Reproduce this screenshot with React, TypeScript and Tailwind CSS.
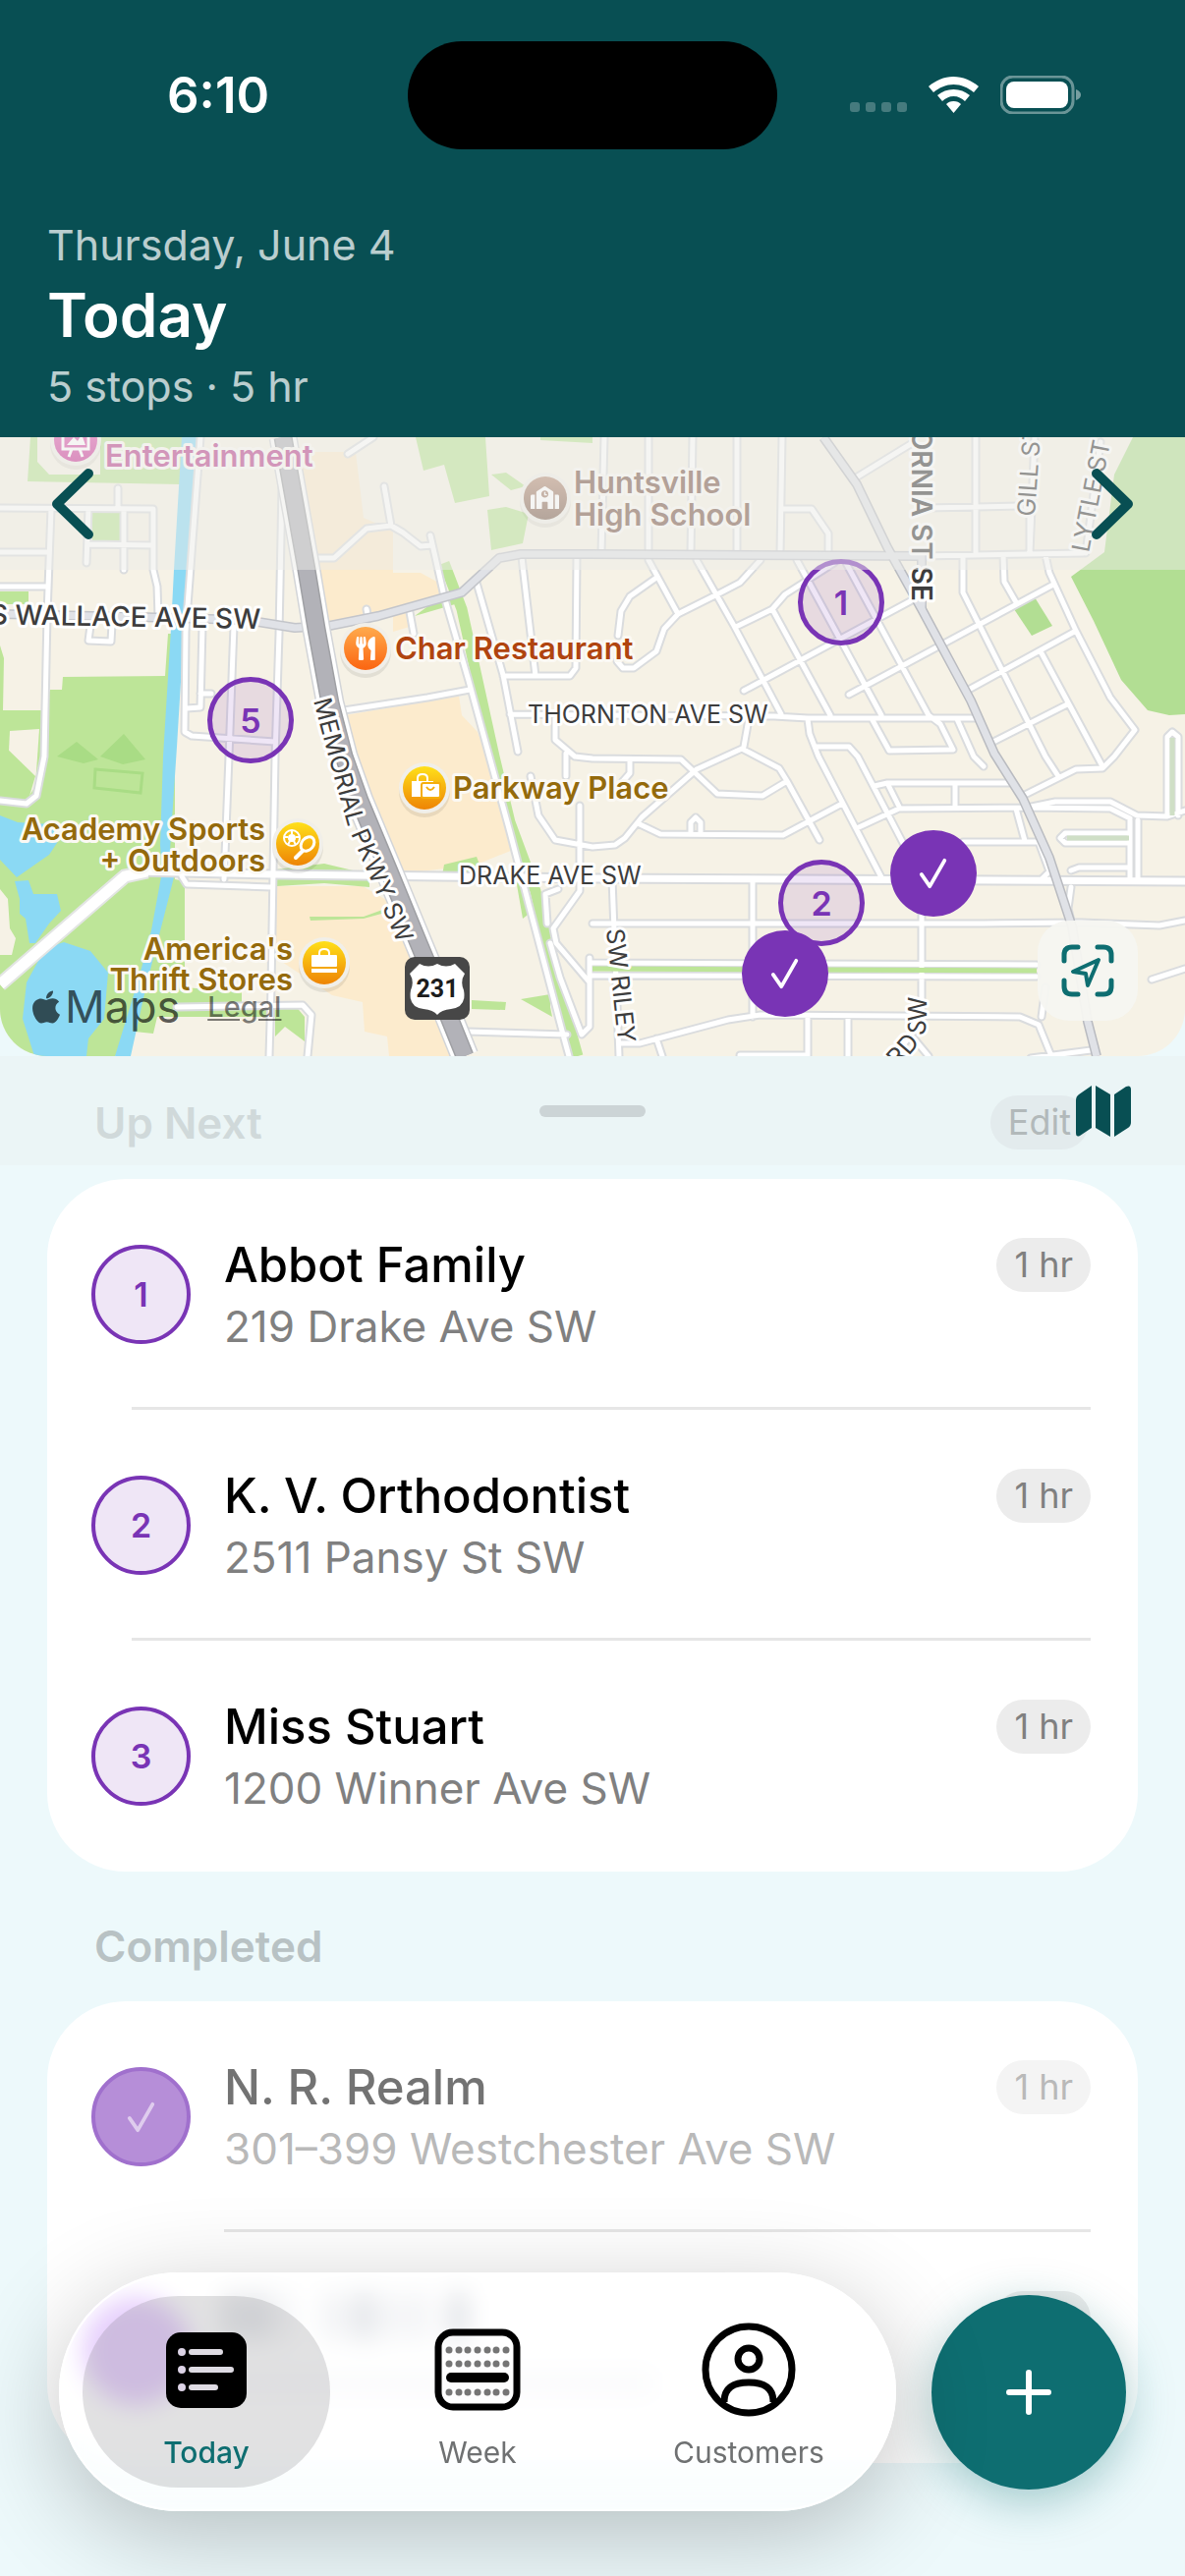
import { useState } from 'react';
import { FaApple, FaSchool, FaUtensils } from 'react-icons/fa';

type Stop = { id: number; name: string; address: string; duration: string };

const upNext: Stop[] = [
  { id: 1, name: 'Abbot Family', address: '219 Drake Ave SW', duration: '1 hr' },
  { id: 2, name: 'K. V. Orthodontist', address: '2511 Pansy St SW', duration: '1 hr' },
  { id: 3, name: 'Miss Stuart', address: '1200 Winner Ave SW', duration: '1 hr' }
];

const streets = [
  // west side
  'M0 72L156 73V135L160 152L161 182',
  'M52 73L48 180L45 325L37 365L27 373L0 370',
  'M0 117H50M0 152H48M120 52V73M90 73L88 128M126 73V135M90 109L156 110',
  'M92 192L90 207L113 208L114 190',
  'M204 0L189 198L188 300L195 304L280 310',
  'M206 192L204 275L190 276M204 261H215',
  'M238 192L233 325L228 450',
  'M288 0L284 200L280 325L276 560L274 630',
  'M185 447L190 455L276 458',
  'M180 580L308 578L317 588L313 630',
  // between the parkway and the school
  'M323 123L340 123L373 93L398 90L410 97L428 111L440 110',
  'M391 50L398 90M354 17L380 0',
  'M350 278L435 265L478 257M417 178L421 200M373 175L375 185',
  'M438 100L452 162L477 248L498 325L519 402L538 475L573 608L579 630',
  'M485 148L512 242L527 320M512 243H580L586 235L587 122M531 122L545 243',
  'M519 282L603 283L788 284L822 286L992 286',
  'M565 285V308L585 325L603 327L693 328L730 363L776 365L801 350',
  'M709 338L755 317L793 337L801 350L834 410',
  'M709 338L653 387L636 408L626 415L603 417L565 410L548 385L540 345M641 328V342L634 350',
  'M576 322V345',
  'M649 393L672 404L797 405L857 373M703 403V392L708 387L713 392V403',
  'M762 287L757 315',
  'M590 375V462L563 500L566 515L600 555M568 460L555 465L557 495',
  'M560 515L570 550L592 608L600 600V530M475 605L577 608',
  // north east grid
  'M615 0L612 118M660 0V118M705 0L703 118M750 0V118M796 0L794 118',
  'M795 73H826L843 98V120M868 43L930 5M993 0V120M943 72L1038 70M1048 78V118',
  'M938 121L1103 118M1120 5L1105 118M1053 0L1048 118',
  'M980 122V158L1064 325M1021 120L1022 147L1034 168',
  'M1064 120L1068 138L1095 197L1130 265L1155 298L1134 325L1122 337L1095 338L1041 365',
  'M864 262L1072 150M984 258L1095 197M1011 310L1086 272M1059 218L1122 335M1064 325L1077 345',
  'M757 258L930 165M749 193L786 175L799 160L849 128',
  'M709 125L747 192L795 282M660 125L690 180M786 175L845 283M811 125L853 202L897 283',
  'M774 125L753 148L730 160L690 180L676 195L668 218L645 235H634L628 228',
  'M668 143L641 162L632 177L629 202',
  'M861 128L945 283L957 292L970 318L905 319L888 288',
  'M822 287L824 302L833 325L897 448M830 315H864L873 325L920 415M974 287L991 325L1001 335',
  // south east
  'M890 355L903 352H1030M872 398L915 378L1045 377M903 352L916 378M972 352V377',
  'M1045 377L1074 371H1130L1157 385L1188 386L1206 380M1045 377L1130 378L1150 388',
  'M1034 378L1043 411M980 412H1057M1150 390V450M1158 390V450',
  'M1149 403H1084L1079 408L1084 413H1149M1090 441L1098 438H1149',
  'M1188 385V305L1193 300L1199 305V385',
  'M603 495L1000 495L1100 494L1180 497L1206 492M766 450V590M623 450L630 630M938 450V600',
  'M603 535L1055 537M603 548L1055 549M1057 412L1068 442L1060 450M1090 458L1087 480L1092 500',
  'M632 617H651L741 593L774 588L1038 590L1057 598L1070 630M1060 590L1064 560',
  'M668 612L674 630M822 592V630M863 592V630M753 629H822M934 600L910 630M930 612L945 630M1172 552L1206 541',
  'M1049 632L1110 624'
].join('');

const greens = [
  'M31 0L28 45L184 48L190 0H102V38H50L38 25V0Z',
  'M94 77H123V105H94ZM0 157H29V170H0Z',
  'M0 212L4 225L3 278H42L51 257H63L64 244L168 243L171 200H178V450L188 452V560L246 565V580L300 578L310 590V615L290 600L280 610V590H160L156 607L137 605L117 630H0Z',
  'M423 0H494L498 60L463 67L452 28L431 34Z',
  'M496 74L515 71L538 78L532 108L500 115ZM500 38L515 36L535 50L520 54Z',
  'M550 0H603V6L550 3Z',
  'M280 440L330 434L376 445V458L330 454L282 457ZM452 435L485 427L490 440L450 446Z',
  'M315 488L370 488L392 480V484L370 490L316 492Z',
  'M480 573L515 575L514 583L480 582ZM530 572L560 567V580L562 590Z',
  'M445 165L465 155L470 168L422 182Z'
];

type Poi = {
  x: number;
  y: number;
  fill: string;
  color: string;
  lines: { text: string; x: number; y: number }[];
  anchor: 'start' | 'end';
};

const pois: Poi[] = [
  { x: 77, y: 3, fill: 'url(#pink)', color: '#b8418c', anchor: 'start', lines: [{ text: 'Entertainment', x: 107, y: 30 }] },
  {
    x: 555, y: 62, fill: 'url(#brown)', color: '#7a5648', anchor: 'start',
    lines: [{ text: 'Huntsville', x: 584, y: 57 }, { text: 'High School', x: 584, y: 90 }]
  },
  { x: 372, y: 215, fill: 'url(#orange)', color: '#b0440f', anchor: 'start', lines: [{ text: 'Char Restaurant', x: 402, y: 226 }] },
  { x: 432, y: 357, fill: 'url(#gold)', color: '#946a0c', anchor: 'start', lines: [{ text: 'Parkway Place', x: 461, y: 368 }] },
  {
    x: 303, y: 414, fill: 'url(#gold)', color: '#946a0c', anchor: 'end',
    lines: [{ text: 'Academy Sports', x: 270, y: 410 }, { text: '+ Outdoors', x: 270, y: 442 }]
  },
  {
    x: 330, y: 535, fill: 'url(#gold)', color: '#946a0c', anchor: 'end',
    lines: [{ text: "America's", x: 298, y: 532 }, { text: 'Thrift Stores', x: 298, y: 563 }]
  }
];

function CheckIcon({ className }: { className: string }) {
  return (
    <svg viewBox="0 0 32 34" className={className} fill="none" stroke="currentColor" strokeWidth="4" strokeLinecap="round" strokeLinejoin="round">
      <path d="M3 18L12 31L28 3" />
    </svg>
  );
}

function Gradient({ id, from, to }: { id: string; from: string; to: string }) {
  return (
    <linearGradient id={id} x1="0" y1="0" x2="0" y2="1">
      <stop offset="0" stopColor={from} />
      <stop offset="1" stopColor={to} />
    </linearGradient>
  );
}

function MapCanvas() {
  return (
    <svg viewBox="0 0 1206 630" preserveAspectRatio="xMidYMid slice" className="block h-full w-full" aria-label="Route map" role="img">
      <defs>
        <Gradient id="pink" from="#e86fbd" to="#c93596" />
        <Gradient id="brown" from="#b98f79" to="#7d5f4f" />
        <Gradient id="orange" from="#ffab4d" to="#fb6511" />
        <Gradient id="gold" from="#ffe01a" to="#ee8405" />
        <path id="memorial" d="M319 268L336 332L354 396L386 471L420 552" />
        <path id="southRoad" d="M898 660L926 628Q943 612 943 592V530" />
      </defs>
      <rect width="1206" height="630" fill="#f6f2e6" />

      {/* retail blocks */}
      <g fill="#fcebcd">
        <path d="M305 15H362L370 82L400 95V138H428L450 150L455 162L335 190Z" />
        <path d="M400 178H420V192L400 198Z" />
        <path d="M352 283L467 263L470 283L486 300L515 380L522 420L485 435L404 445L375 365Z" />
        <path d="M281 457H369L400 475L430 560L458 630H396L394 610L371 605L369 575L338 568L281 530Z" />
      </g>

      {/* parks */}
      <g fill="#bde598">
        {greens.map((d) => (
          <path key={d} d={d} />
        ))}
      </g>
      <path d="M452 128L470 175L503 325L519 392L545 462L560 530L588 630" fill="none" stroke="#bde598" strokeWidth="11" />
      <path d="M525 450L545 480L532 490Z" fill="#bde598" />
      <path d="M1153 0H1206V282L1190 283L1168 278L1141 247L1113 187L1090 142L1124 117L1134 38Z" fill="#b2de93" />
      <path d="M1032 175L1053 163L1071 192L1050 202Z" fill="#b2de93" />
      <path d="M58 325L78 310L100 328L85 332ZM102 325L126 302L148 328L125 333Z" fill="#a9dc85" />
      <path d="M97 338L145 342L143 362L96 357Z" fill="none" stroke="#a9dc85" strokeWidth="3" />
      <path d="M10 299L40 297L36 355L28 368L8 340Z" fill="#f6f2e6" />
      <path d="M0 310L36 345L28 372H0Z" fill="#bde598" />
      <path d="M0 460L8 470L10 500L16 510L12 527H0Z" fill="#f6f2e6" />

      {/* water */}
      <g fill="#8bd9f4">
        <path d="M185 0L177 135L174 195L166 325L163 415L165 442L154 502L142 548L117 630H133L148 562L165 495L177 448L173 420L180 315L190 150L202 0Z" />
        <path d="M0 385L18 392L70 395L50 425L17 448L0 430Z" />
        <path d="M15 452L29 451L34 465L58 465L62 482L50 495L36 515H30L26 490L20 485V470Z" />
        <path d="M46 520L65 514L92 523L110 545L106 592L90 612L88 630H35L23 592L27 555Z" />
      </g>

      {/* streets: casing first, then surface */}
      <path d="M0 557L127 447L150 442" fill="none" stroke="#e3e5e4" strokeWidth="15" />
      <path d="M138 442L280 445L603 449L1206 452" fill="none" stroke="#d9dbdd" strokeWidth="11" />
      <path d={streets} fill="none" stroke="#dadcde" strokeWidth="9" strokeLinejoin="round" strokeLinecap="round" />
      <path d={streets} fill="none" stroke="#ffffff" strokeWidth="5" strokeLinejoin="round" strokeLinecap="round" />
      <path d="M138 442L280 445L603 449L1206 452" fill="none" stroke="#ffffff" strokeWidth="7" />
      <path d="M0 557L127 447L150 442" fill="none" stroke="#ffffff" strokeWidth="11" />
      <path d="M603 541L1055 543" stroke="#bde598" strokeWidth="5" />
      <path d="M1086 408H1149M1193 306V385" stroke="#cfdfc6" strokeWidth="5" />

      {/* arterials */}
      <g fill="none" strokeLinejoin="round">
        <path d="M0 180L140 183L250 186L300 194L335 192L385 182L470 158L508 123L530 119H603L938 121V175" stroke="#c3c5ca" strokeWidth="10" />
        <path d="M838 0L872 48L903 112L938 175L988 268L1012 322L1041 368L1068 428L1091 498L1107 595L1116 630" stroke="#b9bbc0" strokeWidth="10" />
        <path d="M0 180L140 183L250 186L300 194L335 192L385 182L470 158L508 123L530 119H603L938 121V175" stroke="#e0e2e7" strokeWidth="7" />
        <path d="M838 0L872 48L903 112L938 175L988 268L1012 322L1041 368L1068 428L1091 498L1107 595L1116 630" stroke="#e0e2e7" strokeWidth="7" />
        <path d="M288 0L312 135L322 195L336 271L350 325L366 370L396 442L426 515L448 568L473 630" stroke="#d3d5d8" strokeWidth="29" />
        <path d="M288 0L312 135L322 195L336 271L350 325L366 370L396 442L426 515L448 568L473 630" stroke="#ffffff" strokeWidth="26" />
        <path d="M288 0L312 135L322 195L336 271L350 325L366 370L396 442L426 515L448 568L473 630" stroke="#9fa0a4" strokeWidth="19" />
        <path d="M288 0L312 135L322 195L336 271L350 325L366 370L396 442L426 515L448 568L473 630" stroke="#b2b2b8" strokeWidth="16" />
      </g>

      {/* street names */}
      <g fontFamily="Inter, sans-serif" fontSize="25" fill="#3d3d3d" stroke="#ffffff" strokeWidth="6" strokeLinejoin="round" className="[paint-order:stroke]">
        <text x="265" y="195" fontSize="28" fontWeight="500" textAnchor="end" transform="rotate(1 265 195)">S WALLACE AVE SW</text>
        <text x="537" y="291">THORNTON AVE SW</text>
        <text x="467" y="455">DRAKE AVE SW</text>
        <text>
          <textPath href="#memorial">MEMORIAL PKWY SW</textPath>
        </text>
        <text x="928" y="167" fontSize="28" fontWeight="600" textAnchor="end" transform="rotate(90 928 167)">CALIFORNIA ST SE</text>
        <text x="1053" y="81" transform="rotate(-86 1053 81)">GILL ST</text>
        <text x="1108" y="118" transform="rotate(-79 1108 118)">LYTLE ST</text>
        <text x="617" y="501" transform="rotate(84 617 501)">SW RILEY</text>
        <text>
          <textPath href="#southRoad" startOffset="24">RD SW</textPath>
        </text>
      </g>

      {/* places */}
      {pois.map((poi) => (
        <g key={poi.lines[0].text} fontFamily="Inter, sans-serif" fontSize="31" fontWeight="600">
          <circle cx={poi.x} cy={poi.y + 4} r="26" fill="#000000" opacity="0.08" />
          <circle cx={poi.x} cy={poi.y} r="26" fill="#f1efe9" />
          <circle cx={poi.x} cy={poi.y} r="22" fill={poi.fill} />
          {poi.lines.map((line) => (
            <text
              key={line.text}
              x={line.x}
              y={line.y}
              textAnchor={poi.anchor}
              fill={poi.color}
              stroke="#fbf9f4"
              strokeWidth="6"
              strokeLinejoin="round"
              className="[paint-order:stroke]"
            >
              {line.text}
            </text>
          ))}
        </g>
      ))}
      <g fill="none" stroke="#ffffff" strokeWidth="3">
        <path d="M64 -8H90V12H64ZM70 20L73 12M84 20L81 12" />
        <path d="M68 8L75 0L79 4L83 -3L87 8Z" fill="#ffffff" stroke="none" />
      </g>
      <FaSchool x="540" y="47" size={29} color="#ffffff" />
      <FaUtensils x="360" y="203" size={24} color="#ffffff" />
      <g>
        <path d="M419 350H441V366H419Z" fill="#ffffff" />
        <path d="M425 350V347Q425 343 430 343Q435 343 435 347V350" fill="none" stroke="#ffffff" strokeWidth="2" />
        <rect x="429" y="352" width="19" height="15" rx="2" fill="#ffffff" stroke="#f5ae0b" strokeWidth="2" />
        <path d="M434 356Q438 362 442 356" fill="none" stroke="#f5ae0b" strokeWidth="2" />
      </g>
      <g fill="none" stroke="#ffffff" strokeWidth="2">
        <circle cx="297" cy="408" r="8" />
        <circle cx="297" cy="408" r="3" fill="#ffffff" />
        <path d="M297 400V404M289 407H293M305 407H301M293 415L295 411M301 415L299 411" />
        <ellipse cx="313" cy="414" rx="6" ry="8" transform="rotate(40 313 414)" strokeWidth="3" />
        <path d="M308 421L301 428" strokeWidth="4" strokeLinecap="round" />
      </g>
      <g fill="#ffffff">
        <rect x="317" y="527" width="26" height="12" rx="1" />
        <path d="M317 541H343V545H317Z" />
        <path d="M325 528V525Q325 521 330 521Q335 521 335 525V528" fill="none" stroke="#ffffff" strokeWidth="2" />
      </g>

      {/* US route shield */}
      <rect x="412" y="529" width="66" height="64" rx="10" fill="#474747" />
      <path d="M427 536Q436 541 445 536Q454 541 463 536L473 546Q468 554 472 563Q475 580 459 582Q449 583 445 588Q441 583 431 582Q415 580 418 563Q422 554 417 546Z" fill="#ffffff" />
      <text x="445" y="570" textAnchor="middle" fontFamily="Roboto, sans-serif" fontSize="25" fontWeight="700" fill="#1d1d1d">231</text>
    </svg>
  );
}

const mapPins = [
  { label: '5', place: 'left-[211px] top-[244px]' },
  { label: '1', place: 'left-[812px] top-[124px]' },
  { label: '2', place: 'left-[792px] top-[430px]' },
  { label: 'done-1', place: 'left-[906px] top-[400px]' },
  { label: 'done-2', place: 'left-[755px] top-[502px]' }
];

function RouteMap() {
  return (
    <section className="relative h-[630px] overflow-hidden rounded-b-[48px]">
      <MapCanvas />
      {mapPins.map((pin) =>
        pin.label.startsWith('done') ? (
          <button
            key={pin.label}
            aria-label="Completed stop"
            className={`absolute flex size-[88px] items-center justify-center rounded-full bg-[#7934b5] text-white ${pin.place}`}
          >
            <CheckIcon className="size-8" />
          </button>
        ) : (
          <button
            key={pin.label}
            className={`absolute flex size-[88px] items-center justify-center rounded-full border-[5px] border-[#7934b5] bg-[#7934b5]/12 text-[34px] font-semibold text-[#7934b5] ${pin.place}`}
          >
            {pin.label}
          </button>
        )
      )}

      <div className="absolute inset-x-0 top-0 flex h-[135px] items-center justify-between bg-[#ecece7]/50 px-[50px]">
        <button aria-label="Previous day" className="text-[#084f53]">
          <svg width="46" height="74" viewBox="0 0 46 74" fill="none" stroke="currentColor" strokeWidth="10" strokeLinecap="round" strokeLinejoin="round">
            <path d="M40 6L8 37L40 68" />
          </svg>
        </button>
        <button aria-label="Next day" className="text-[#084f53]">
          <svg width="46" height="74" viewBox="0 0 46 74" fill="none" stroke="currentColor" strokeWidth="10" strokeLinecap="round" strokeLinejoin="round">
            <path d="M6 6L38 37L6 68" />
          </svg>
        </button>
      </div>

      <div className="absolute bottom-6 left-7 flex items-center text-black/65">
        <FaApple size={38} />
        <span className="text-[45px] leading-[52px]">Maps</span>
        <a href="#legal" className="ml-7 text-[29px] leading-9 font-medium text-black/50 underline">Legal</a>
      </div>

      <button
        aria-label="Center on my location"
        className="absolute right-12 bottom-9 flex size-[102px] items-center justify-center rounded-[32px] bg-[#f5f6f1]/95 text-[#0e6e71]"
      >
        <svg width="54" height="54" viewBox="0 0 54 54" fill="none" stroke="currentColor" strokeWidth="5" strokeLinecap="round" strokeLinejoin="round">
          <path d="M3 17V11Q3 3 11 3H17M37 3H43Q51 3 51 11V17M51 37V43Q51 51 43 51H37M17 51H11Q3 51 3 43V37" />
          <path d="M38 16L12 28L25 30L27 42Z" strokeWidth="4" />
        </svg>
      </button>
    </section>
  );
}

function StatusBar() {
  return (
    <div className="grid h-[193px] grid-cols-3 items-center">
      <span className="pl-[170px] text-[51px] leading-none font-semibold">6:10</span>
      <div className="h-[110px] w-[376px] justify-self-center rounded-full bg-black" />
      <div className="flex items-center justify-end gap-[22px] pr-[106px]">
        <div className="flex gap-[6px] pt-6">
          <i className="size-[10px] rounded-[3px] bg-white/25" />
          <i className="size-[10px] rounded-[3px] bg-white/25" />
          <i className="size-[10px] rounded-[3px] bg-white/25" />
          <i className="size-[10px] rounded-[3px] bg-white/25" />
        </div>
        <svg width="51" height="37" viewBox="0 0 51 37" fill="currentColor">
          <path d="M25 0C35 0 44 4 51 10L46 16C40 11 33 8 25.500 8C18 8 11 11 5 16L0 10C7 4 16 0 25 0Z" />
          <path d="M25.500 13C32 13 37 15 42 19L37 25C34 22 30 20 25.500 20C21 20 17 22 14 25L9 19C14 15 19 13 25.500 13Z" />
          <path d="M25.500 25C29 25 31 26 33 28L25.500 37L18 28C20 26 22 25 25.500 25Z" />
        </svg>
        <svg width="82" height="39" viewBox="0 0 82 39" fill="none">
          <rect x="1" y="1" width="73" height="37" rx="12" stroke="white" strokeOpacity="0.4" strokeWidth="3" />
          <rect x="6" y="6" width="63" height="27" rx="8" fill="white" />
          <path d="M77 14Q82 16 82 19.500Q82 23 77 25Z" fill="white" fillOpacity="0.45" />
        </svg>
      </div>
    </div>
  );
}

function StopRow({ stop }: { stop: Stop }) {
  return (
    <li className="relative flex h-[235px] items-start gap-[34px] px-[45px] pt-[58px] not-last:after:absolute not-last:after:right-12 not-last:after:bottom-0 not-last:after:left-[86px] not-last:after:h-[3px] not-last:after:bg-[#e6e6e6]">
      <span className="mt-[9px] flex size-[101px] shrink-0 items-center justify-center rounded-full border-4 border-[#7934b5] bg-[#efe6f6] text-[34px] font-semibold text-[#7934b5]">
        {stop.id}
      </span>
      <div className="flex-1">
        <h3 className="text-[49px] leading-[60px] font-medium text-black">{stop.name}</h3>
        <p className="text-[44px] leading-[64px] text-[#808080]">{stop.address}</p>
      </div>
      <span className="mt-[2px] mr-[3px] rounded-full bg-[#ececec] px-[18px] text-[36px] leading-[55px] text-[#808080]">{stop.duration}</span>
    </li>
  );
}

function TodayIcon() {
  return (
    <svg width="82" height="77" viewBox="0 0 82 77">
      <rect width="82" height="77" rx="15" fill="#000000" />
      <g stroke="#dedbe3" strokeWidth="6" strokeLinecap="round">
        <path d="M26 20H55M26 38H66M26 56H50" />
      </g>
      <g fill="#dcd3e6">
        <circle cx="16" cy="20" r="4" />
        <circle cx="16" cy="38" r="4" />
        <circle cx="16" cy="56" r="4" />
      </g>
    </svg>
  );
}

function WeekIcon() {
  return (
    <svg width="88" height="84" viewBox="0 0 88 84">
      <rect x="4" y="4" width="80" height="76" rx="15" fill="none" stroke="#000000" strokeWidth="7" />
      {[22, 36, 65].map((y) =>
        [15, 25, 34, 44, 54, 63, 73].map((x) => <circle key={`${x}-${y}`} cx={x} cy={y} r="3.500" fill="#757575" />)
      )}
      <path d="M17 50H71" stroke="#000000" strokeWidth="10" strokeLinecap="round" />
    </svg>
  );
}

function CustomersIcon() {
  return (
    <svg width="96" height="96" viewBox="0 0 96 96" fill="none" stroke="#000000" strokeWidth="7">
      <circle cx="48" cy="48" r="44" />
      <circle cx="48" cy="37" r="11" />
      <path d="M23 81C23 66 33 61 48 61C63 61 73 66 73 81" />
    </svg>
  );
}

const tabs = [
  { id: 'today', title: 'Today', Icon: TodayIcon },
  { id: 'week', title: 'Week', Icon: WeekIcon },
  { id: 'customers', title: 'Customers', Icon: CustomersIcon }
];

export default function App() {
  const [activeTab, setActiveTab] = useState('today');

  return (
    <div className="min-h-screen bg-[#edf9fb] font-[Inter,sans-serif]">
      <header className="bg-[#084f53] pb-6 text-white">
        <StatusBar />
        <div className="px-12 pt-7">
          <p className="text-[43px] leading-[56px] text-white/72">Thursday, June 4</p>
          <h1 className="text-[62px] leading-[88px] font-semibold">Today</h1>
          <p className="text-[43px] leading-[56px] text-white/72">5 stops · 5 hr</p>
        </div>
      </header>

      <RouteMap />

      <main className="pb-[115px]">
        <div className="relative flex h-[111px] items-center justify-between bg-[#ebf5f6] pt-6 pr-[98px] pl-24">
          <h2 className="text-[44px] leading-[56px] font-semibold text-[#d0d9da]">Up Next</h2>
          <button className="rounded-full bg-[#e3ebed] px-[18px] text-[36px] leading-[55px] text-[#b2b9ba]">Edit</button>
          <div className="absolute inset-x-0 top-[50px] mx-auto h-3 w-[108px] rounded-full bg-[#ccd4d6]" />
          <button aria-label="Show map" className="absolute top-[30px] right-[55px] text-[#084f53]">
            <svg width="56" height="52" viewBox="0 0 56 52" fill="currentColor">
              <path d="M16 0V43L4 51Q0 53 0 48V15Q0 11 3 9Z" />
              <path d="M20 0L35 9V52L20 43Z" />
              <path d="M39 9L51 1Q56 -1 56 4V37Q56 41 53 43L39 52Z" />
            </svg>
          </button>
        </div>

        <ul className="mx-12 mt-[14px] rounded-[80px] bg-white">
          {upNext.map((stop) => (
            <StopRow key={stop.id} stop={stop} />
          ))}
        </ul>

        <h2 className="px-24 pt-12 pb-7 text-[44px] leading-[56px] font-semibold text-[#b8c2c4]">Completed</h2>

        <ul className="mx-12 rounded-[80px] bg-white">
          <li className="relative flex h-[235px] items-start gap-[34px] px-[45px] pt-[58px] after:absolute after:right-12 after:bottom-0 after:left-[180px] after:h-[3px] after:bg-[#e6e6e6]">
            <span className="mt-[9px] flex size-[101px] shrink-0 items-center justify-center rounded-full border-4 border-[#a070cd] bg-[#b68ed8] text-[#dfccee]">
              <CheckIcon className="size-8" />
            </span>
            <div className="flex-1">
              <h3 className="text-[49px] leading-[60px] font-medium text-[#737373]">N. R. Realm</h3>
              <p className="text-[44px] leading-[64px] text-[#b9b9b9]">301–399 Westchester Ave SW</p>
            </div>
            <span className="mt-[2px] mr-[3px] rounded-full bg-[#f4f4f4] px-[18px] text-[36px] leading-[55px] text-[#b9b9b9]">1 hr</span>
          </li>
          {/* scrolled under the tab bar */}
          <li aria-hidden="true" className="flex h-[235px] items-start gap-[34px] px-9 pt-[58px]">
            <span className="mt-2 size-[110px] shrink-0 rounded-full bg-[#ad62f5]" />
            <div className="flex flex-1 flex-col gap-7 pt-1">
              <div className="flex gap-2">
                <span className="h-12 w-4 bg-gray-400" />
                <span className="h-12 w-5 bg-gray-400" />
                <span className="h-12 w-4 bg-gray-300" />
                <span className="ml-6 h-12 w-6 bg-gray-300" />
                <span className="h-12 w-5 bg-gray-400" />
                <span className="h-12 w-5 bg-gray-300" />
                <span className="h-12 w-5 bg-gray-300" />
                <span className="ml-3 h-12 w-5 bg-gray-400" />
              </div>
              <span className="h-8 w-[440px] rounded bg-gray-100" />
            </div>
            <span className="mt-[2px] mr-3 h-[55px] w-[97px] rounded-full bg-[#ececec]" />
          </li>
        </ul>
      </main>

      <div className="fixed inset-x-0 bottom-0 flex items-center justify-between px-[60px] pb-[66px]">
        <nav className="flex gap-6 rounded-full border-2 border-white bg-white/70 px-[22px] py-[22px] shadow-[0_24px_100px_rgba(0,0,0,0.24)] backdrop-blur-md">
          {tabs.map(({ id, title, Icon }) => (
            <button
              key={id}
              onClick={() => setActiveTab(id)}
              className={`flex h-[195px] w-[252px] flex-col items-center rounded-full pt-[27px] text-[30px] ${
                activeTab === id ? 'bg-[#78787d]/22 font-medium text-[#0e6e71]' : 'text-[#6f7172]'
              }`}
            >
              <span className="flex h-24 items-center">
                <Icon />
              </span>
              <span className="mt-4 leading-10">{title}</span>
            </button>
          ))}
        </nav>
        <button
          aria-label="Add stop"
          className="flex size-[198px] items-center justify-center rounded-full bg-[#0e6e71] text-white shadow-[0_12px_48px_rgba(14,110,113,0.35)]"
        >
          <svg width="46" height="46" viewBox="0 0 46 46" fill="none" stroke="currentColor" strokeWidth="6" strokeLinecap="round">
            <path d="M23 3V43M3 23H43" />
          </svg>
        </button>
      </div>
    </div>
  );
}
